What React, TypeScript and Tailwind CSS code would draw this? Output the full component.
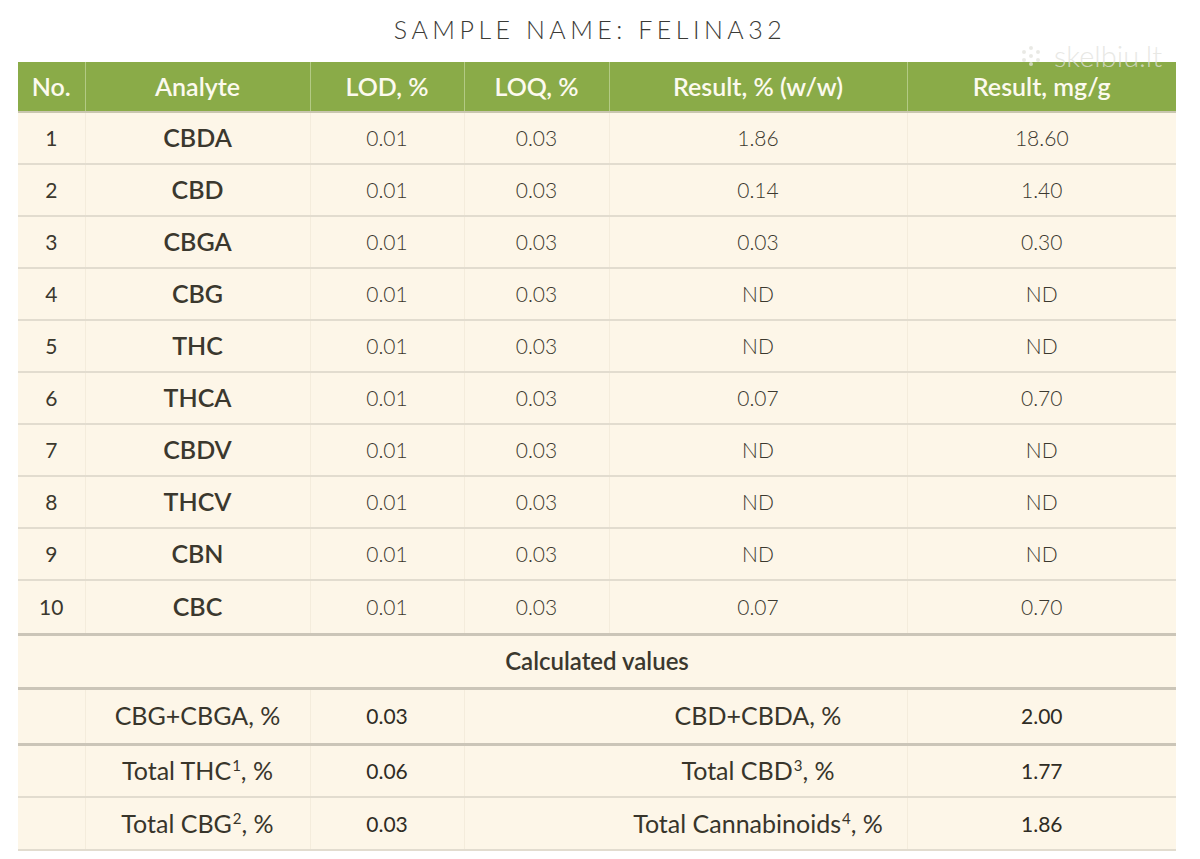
import React from 'react'

const rows = [
  ['1', 'CBDA', '0.01', '0.03', '1.86', '18.60'],
  ['2', 'CBD', '0.01', '0.03', '0.14', '1.40'],
  ['3', 'CBGA', '0.01', '0.03', '0.03', '0.30'],
  ['4', 'CBG', '0.01', '0.03', 'ND', 'ND'],
  ['5', 'THC', '0.01', '0.03', 'ND', 'ND'],
  ['6', 'THCA', '0.01', '0.03', '0.07', '0.70'],
  ['7', 'CBDV', '0.01', '0.03', 'ND', 'ND'],
  ['8', 'THCV', '0.01', '0.03', 'ND', 'ND'],
  ['9', 'CBN', '0.01', '0.03', 'ND', 'ND'],
  ['10', 'CBC', '0.01', '0.03', '0.07', '0.70'],
]

const headers = ['No.', 'Analyte', 'LOD, %', 'LOQ, %', 'Result, % (w/w)', 'Result, mg/g']

function Watermark() {
  return (
    <div className="absolute left-[1020px] top-[41px] flex items-center gap-[12px] text-[rgba(225,225,220,0.75)] pointer-events-none leading-none">
      <svg width="22" height="22" viewBox="0 0 22 22" fill="currentColor">
        <circle cx="11" cy="3" r="2" />
        <circle cx="4" cy="7" r="2" />
        <circle cx="18" cy="7" r="2" />
        <circle cx="11" cy="11" r="2" />
        <circle cx="4" cy="15" r="2" />
        <circle cx="18" cy="15" r="2" />
        <circle cx="11" cy="19" r="2" />
      </svg>
      <span className="text-[29px] font-light">skelbiu.lt</span>
    </div>
  )
}

type CalcProps = { l1: React.ReactNode; v1: string; l2: React.ReactNode; v2: string; thick?: boolean }

function CalcRow({ l1, v1, l2, v2, thick }: CalcProps) {
  return (
    <tr className={thick ? 'h-[56px] border-b-[3px] border-[#cbc5b8]' : 'h-[53px] border-b-2 border-[#e2dccf]'}>
      <td className="border-r border-[#f4ecdc]"></td>
      <td className="text-center text-[25px] text-[#38352b] border-r border-[#f4ecdc]">{l1}</td>
      <td className="text-center text-[21px] text-[#2f2c24] border-r border-[#f4ecdc]">{v1}</td>
      <td colSpan={2} className="text-center text-[25px] text-[#38352b] pl-[145px] border-r border-[#f4ecdc]">{l2}</td>
      <td className="text-center text-[21px] text-[#2f2c24]">{v2}</td>
    </tr>
  )
}

function Sup({ n }: { n: string }) {
  return <sup className="text-[15px] relative -top-[9px] ml-[1px]">{n}</sup>
}

export default function App() {
  return (
    <div className="relative w-[1200px] h-[859px] bg-white overflow-hidden" style={{ fontFamily: 'Lato, "Noto Sans", sans-serif' }}>
      <div className="h-[62px] flex items-center justify-center pr-[20px] pb-[2px]">
        <h1 className="text-[25px] font-light tracking-[0.18em] text-[#3a3a36]">SAMPLE NAME: FELINA32</h1>
      </div>
      <table className="ml-[18px] w-[1158px] table-fixed border-collapse bg-[#fdf6e8]">
        <colgroup>
          <col className="w-[67px]" />
          <col className="w-[225px]" />
          <col className="w-[154px]" />
          <col className="w-[145px]" />
          <col className="w-[298px]" />
          <col className="w-[269px]" />
        </colgroup>
        <thead>
          <tr className="h-[50px] bg-[#8aab48] border-b-2 border-[#c9c6b0]">
            {headers.map((h, i) => (
              <th key={h} className={`text-center text-[25px] font-semibold text-[#fcfaee] ${i < 5 ? 'border-r border-[#b3ca84]' : ''}`}>
                {h}
              </th>
            ))}
          </tr>
        </thead>
        <tbody>
          {rows.map((r, idx) => (
            <tr key={r[0]} className={idx === 9 ? 'h-[54px] border-b-[3px] border-[#cbc5b8]' : 'h-[52px] border-b-2 border-[#e2dccf]'}>
              <td className="text-center text-[21px] text-[#3b382e] border-r border-[#f4ecdc]">{r[0]}</td>
              <td className="text-center text-[25px] font-semibold text-[#3b382e] border-r border-[#f4ecdc]">{r[1]}</td>
              <td className="text-center text-[21px] font-light text-[#3b382e] border-r border-[#f4ecdc]">{r[2]}</td>
              <td className="text-center text-[21px] font-light text-[#3b382e] border-r border-[#f4ecdc]">{r[3]}</td>
              <td className="text-center text-[21px] font-light text-[#3b382e] border-r border-[#f4ecdc]">{r[4]}</td>
              <td className="text-center text-[21px] font-light text-[#3b382e]">{r[5]}</td>
            </tr>
          ))}
          <tr className="h-[54px] border-b-[3px] border-[#cbc5b8]">
            <td colSpan={6} className="text-center text-[24px] font-semibold text-[#3b382e]">
              Calculated values
            </td>
          </tr>
          <CalcRow l1="CBG+CBGA, %" v1="0.03" l2="CBD+CBDA, %" v2="2.00" thick />
          <CalcRow
            l1={<>Total THC<Sup n="1" />, %</>}
            v1="0.06"
            l2={<>Total CBD<Sup n="3" />, %</>}
            v2="1.77"
          />
          <CalcRow
            l1={<>Total CBG<Sup n="2" />, %</>}
            v1="0.03"
            l2={<>Total Cannabinoids<Sup n="4" />, %</>}
            v2="1.86"
          />
        </tbody>
      </table>
      <Watermark />
    </div>
  )
}
